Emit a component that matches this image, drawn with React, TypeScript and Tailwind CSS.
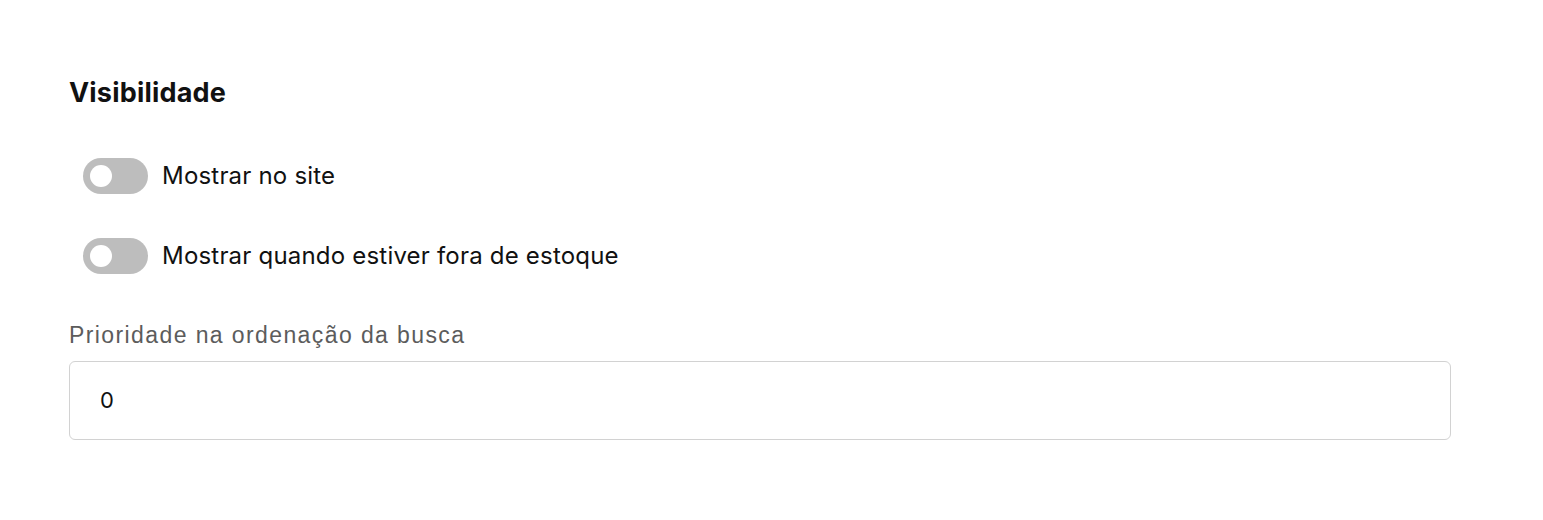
import React from "react";

function Toggle({ label }: { label: string }) {
  return (
    <div className="flex items-center gap-[14px]">
      <div className="relative w-[65px] h-[36px] rounded-full bg-[#bdbdbd] shrink-0">
        <div className="absolute left-[7px] top-[7px] w-[22px] h-[22px] rounded-full bg-white" />
      </div>
      <span className="text-[24px] tracking-[0.2px] text-[#111111] leading-none">{label}</span>
    </div>
  );
}

export default function App() {
  return (
    <div className="w-[1543px] h-[520px] bg-white" style={{ fontFamily: "Inter, 'Noto Sans', sans-serif" }}>
      <div className="pl-[69px] pr-[92px] pt-[78px]">
        <h2 className="text-[27px] font-bold tracking-[0.2px] text-[#111111] leading-[30px]">Visibilidade</h2>
        <div className="pl-[14px] mt-[50px] flex flex-col gap-[44px]">
          <Toggle label="Mostrar no site" />
          <Toggle label="Mostrar quando estiver fora de estoque" />
        </div>
        <div className="mt-[48px] text-[23px] tracking-[1.4px] text-[#5c5c5c] leading-[26px]" style={{ fontFamily: "'Liberation Sans', Arial, sans-serif" }}>
          Prioridade na ordenação da busca
        </div>
        <div className="mt-[13px] h-[79px] border border-[#d2d2d2] rounded-[6px] flex items-center pl-[30px]">
          <span className="text-[22px] text-[#111111]">0</span>
        </div>
      </div>
    </div>
  );
}
